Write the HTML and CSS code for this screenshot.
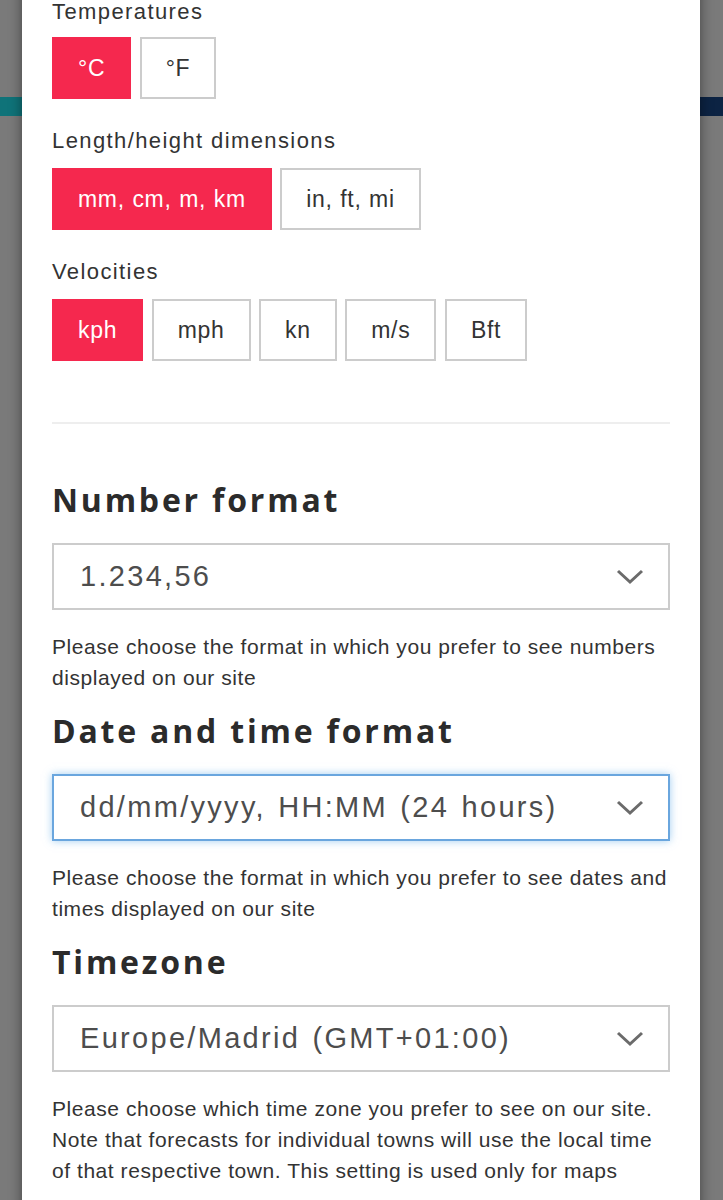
FILE: index.html
```html
<!DOCTYPE html>
<html lang="en">

<head>
    <meta charset="UTF-8">
    <meta name="viewport" content="width=device-width, initial-scale=1.0">
    <title>Settings</title>
    <link rel="stylesheet" href="styles.css">
</head>

<body>
    <div class="panel">
        <div class="group">
            <div class="label">Temperatures</div>
            <div class="options">
                <button class="opt active">°C</button>
                <button class="opt">°F</button>
            </div>
        </div>

        <div class="group">
            <div class="label">Length/height dimensions</div>
            <div class="options">
                <button class="opt active">mm, cm, m, km</button>
                <button class="opt">in, ft, mi</button>
            </div>
        </div>

        <div class="group">
            <div class="label">Velocities</div>
            <div class="options">
                <button class="opt active">kph</button>
                <button class="opt">mph</button>
                <button class="opt">kn</button>
                <button class="opt">m/s</button>
                <button class="opt">Bft</button>
            </div>
        </div>

        <hr class="divider">

        <h2>Number format</h2>
        <div class="select">
            <span>1.234,56</span>
            <svg class="chevron" width="28" height="16" viewBox="0 0 28 16"><path d="M2 2 L14 13 L26 2" fill="none" stroke="#6b6b6b" stroke-width="3"/></svg>
        </div>
        <p class="help">Please choose the format in which you prefer to see numbers displayed on our site</p>

        <h2>Date and time format</h2>
        <div class="select focused">
            <span>dd/mm/yyyy, HH:MM (24 hours)</span>
            <svg class="chevron" width="28" height="16" viewBox="0 0 28 16"><path d="M2 2 L14 13 L26 2" fill="none" stroke="#6b6b6b" stroke-width="3"/></svg>
        </div>
        <p class="help">Please choose the format in which you prefer to see dates and times displayed on our site</p>

        <h2>Timezone</h2>
        <div class="select">
            <span>Europe/Madrid (GMT+01:00)</span>
            <svg class="chevron" width="28" height="16" viewBox="0 0 28 16"><path d="M2 2 L14 13 L26 2" fill="none" stroke="#6b6b6b" stroke-width="3"/></svg>
        </div>
        <p class="help">Please choose which time zone you prefer to see on our site. Note that forecasts for individual towns will use the local time of that respective town. This setting is used only for maps</p>
    </div>
</body>

</html>
```

FILE: styles.css
```css
body {
    margin: 0;
    font-family: "Liberation Sans", Arial, sans-serif;
    color: #333;
    background-color: #7a7a7a;
    background-image: linear-gradient(to right, #0f7379 50%, #0c2343 50%);
    background-size: 100% 19px;
    background-position: 0 97px;
    background-repeat: no-repeat;
    height: 1200px;
    overflow: hidden;
}

.panel {
    background: #fff;
    margin: -32px 23px 0 22px;
    padding: 0 30px 40px;
    box-shadow: 0 0 12px rgba(0, 0, 0, 0.45);
    min-height: 1300px;
}

.group {
    padding-top: 27px;
}

/* page is scrolled, first label sits right at the top edge */
.group:first-child {
    padding-top: 29px;
}

.group:first-child .label {
    margin-bottom: 10px;
}

.label {
    font-size: 22px;
    line-height: 30px;
    letter-spacing: 1.4px;
    margin-bottom: 12px;
    color: #333;
}

.options {
    display: flex;
    gap: 8.5px;
}

.opt {
    height: 62px;
    padding: 0 24px;
    border: 2px solid #ccc;
    background: #fff;
    color: #333;
    font-family: inherit;
    font-size: 23px;
    letter-spacing: 0.7px;
    word-spacing: 0.5px;
}

.opt.active {
    background: #f5284e;
    border-color: #f5284e;
    color: #fff;
}

.divider {
    border: none;
    border-top: 2px solid #eee;
    margin: 61px 0 0;
}

h2 {
    font-family: "Open Sans", sans-serif;
    font-weight: 700;
    font-size: 32px;
    letter-spacing: 2.8px;
    line-height: 40px;
    color: #2b2b2b;
    margin: 57px 0 23px;
}

.divider + h2 {
    margin-top: 56px;
}

.select {
    height: 67px;
    border: 2px solid #ccc;
    box-sizing: border-box;
    display: flex;
    align-items: center;
    justify-content: space-between;
    padding: 0 24px 0 26px;
    font-size: 29px;
    letter-spacing: 2.3px;
    word-spacing: 2px;
    color: #4d4d4d;
}

.select.focused {
    border-color: #6aa6de;
    box-shadow: 0 0 8px rgba(102, 175, 233, 0.6);
}

.chevron {
    display: block;
}

.help {
    font-size: 21px;
    line-height: 31px;
    letter-spacing: 0.55px;
    margin: 21px 0 0;
    color: #333;
}

.help + h2 {
    margin-top: 18px;
}
```
